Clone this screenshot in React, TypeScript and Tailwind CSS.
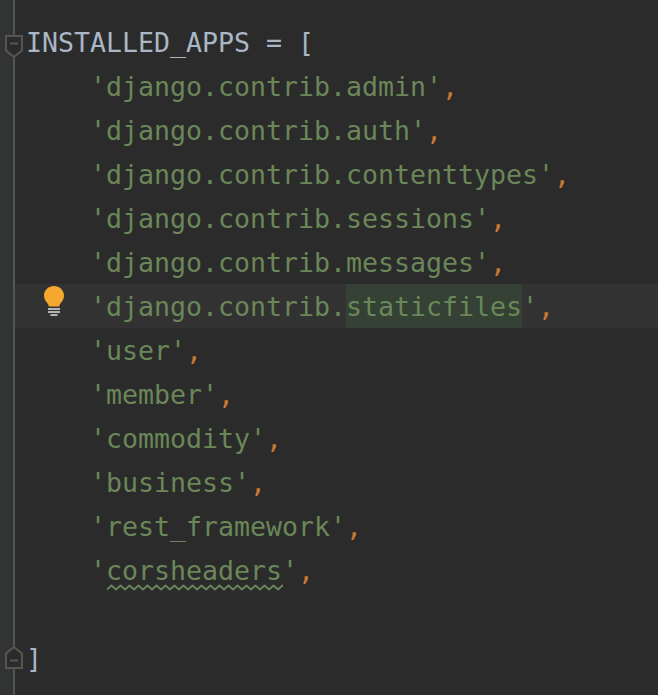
const lines = [
  "django.contrib.admin",
  "django.contrib.auth",
  "django.contrib.contenttypes",
  "django.contrib.sessions",
  "django.contrib.messages",
];
const lines2 = ["user", "member", "commodity", "business", "rest_framework"];

const rowClasses = "h-[44px] leading-[46px] pl-[11px] whitespace-pre";

const Entry = ({ name }: { name: string }): React.ReactNode => (
  <div className={rowClasses}>
    <span className="text-[#6a8759]">{`    '${name}'`}</span>
    <span className="text-[#cc7832]">,</span>
  </div>
);

const Squiggle = (): React.ReactNode => {
  let d = "M0 5.5";
  for (let x = 0; x < 176; x += 9) {
    d += ` L${x + 4.5} 1.5 L${x + 9} 5.5`;
  }
  return (
    <svg className="absolute left-[107px] top-[584px]" width="176" height="7" viewBox="0 0 176 7">
      <path d={d} fill="none" stroke="#6a8759" strokeWidth="1.7" />
    </svg>
  );
};

const FoldOpen = (): React.ReactNode => (
  <svg className="absolute left-[5px] top-[34px]" width="18" height="25" viewBox="0 0 18 25">
    <path d="M1 2H17V16.5L9 23L1 16.5Z" fill="#2b2b2b" stroke="#555555" strokeWidth="2" />
    <path d="M5 9.5H13" stroke="#555555" strokeWidth="2" />
  </svg>
);

const FoldClose = (): React.ReactNode => (
  <svg className="absolute left-[5px] top-[645px]" width="18" height="25" viewBox="0 0 18 25">
    <path d="M1 23H17V8.5L9 2L1 8.5Z" fill="#2b2b2b" stroke="#555555" strokeWidth="2" />
    <path d="M5 15.5H13" stroke="#555555" strokeWidth="2" />
  </svg>
);

const Bulb = (): React.ReactNode => (
  <svg className="absolute left-[43px] top-[285px]" width="22" height="32" viewBox="0 0 22 32">
    <path
      d="M11 1C5.5 1 1 5.2 1 10.4C1 14 2.8 16.4 4.4 18.2C5.2 19.2 5.6 20.2 5.8 21.5H16.2C16.4 20.2 16.8 19.2 17.6 18.2C19.2 16.4 21 14 21 10.4C21 5.2 16.5 1 11 1Z"
      fill="#f5a72f"
    />
    <path d="M5 24H17M5 27H17M7.5 30H14.5" stroke="#b4b4b4" strokeWidth="2" />
  </svg>
);

const App = (): React.ReactNode => {
  return (
    <div
      className="relative flex h-[695px] w-[658px] overflow-hidden bg-[#2b2b2b] text-[26.58px] text-[#a9b7c6]"
      style={{ fontFamily: '"DejaVu Sans Mono", monospace' }}
    >
      <div className="w-[15px] shrink-0 border-r-2 border-[#555555] bg-[#313335]" />
      <div className="flex-1 pt-[20px]">
        <div className={rowClasses}>INSTALLED_APPS = [</div>
        {lines.map((l) => (
          <Entry key={l} name={l} />
        ))}
        <div className={`${rowClasses} bg-[#323232]`}>
          <span className="text-[#6a8759]">{"    'django.contrib."}</span>
          <span className="inline-block h-[44px] bg-[#344134] text-[#6a8759]">staticfiles</span>
          <span className="text-[#6a8759]">'</span>
          <span className="text-[#cc7832]">,</span>
        </div>
        {lines2.map((l) => (
          <Entry key={l} name={l} />
        ))}
        <Entry name="corsheaders" />
        <div className={rowClasses}> </div>
        <div className={rowClasses}>]</div>
      </div>
      <FoldOpen />
      <FoldClose />
      <Bulb />
      <Squiggle />
    </div>
  );
};

export default App;
